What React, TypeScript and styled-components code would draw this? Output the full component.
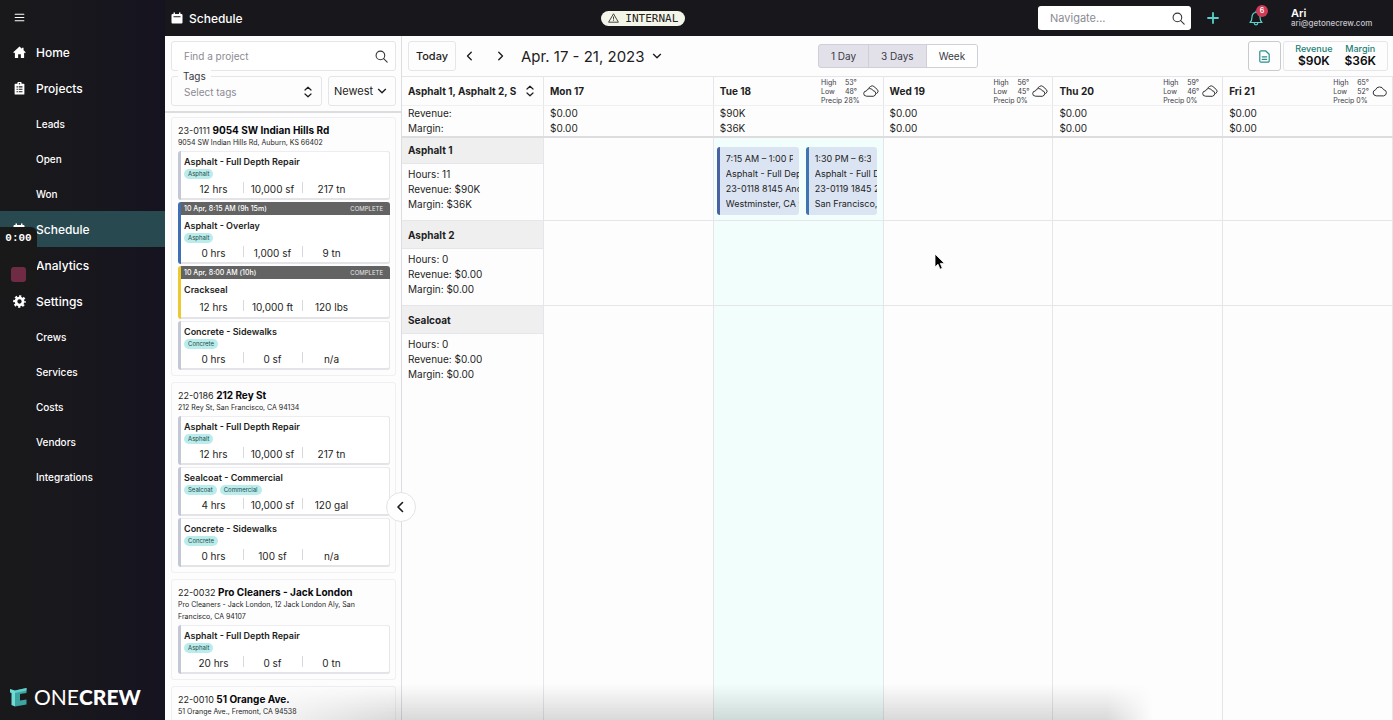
import React from "react";
import styled, { createGlobalStyle, css } from "styled-components";
import { LuMenu } from "react-icons/lu";

const GlobalStyle = createGlobalStyle`
  *, *::before, *::after { box-sizing: border-box; }
  body { margin: 0; font-family: Inter, "Liberation Sans", sans-serif; color: #1d1d22; background: #fdfdfe; }
  button, input, select { font: inherit; color: inherit; margin: 0; padding: 0; }
  h1, h2, h3, p, ul, dl, dd { margin: 0; padding: 0; font: inherit; }
  ul { list-style: none; }
  a { color: inherit; text-decoration: none; }
  svg { display: block; flex: none; }
`;

const teal = "#5bd0cb";
const line = "#e6e6ea";

/* ---------- shell ---------- */

const Shell = styled.div`
  display: flex;
  height: 100vh;
  overflow: hidden;
`;

const Sidebar = styled.aside`
  position: relative;
  display: flex;
  flex-direction: column;
  flex: none;
  width: 165px;
  color: #fff;
  background: linear-gradient(90deg, #19191b 0%, #18171d 50%, #161320 100%);
`;

const MenuButton = styled.button`
  display: flex;
  align-items: center;
  height: 34px;
  padding-left: 13px;
  border: 0;
  background: none;
`;

const Nav = styled.nav`
  display: flex;
  flex-direction: column;
  flex: 1;
`;

const NavLink = styled.a<{ $sub?: boolean; $active?: boolean }>`
  display: flex;
  align-items: center;
  height: ${(p) => (p.$sub ? 35 : 36)}px;
  padding-left: 13px;
  font-size: ${(p) => (p.$sub ? 10 : 12)}px;
  font-weight: 500;
  background: ${(p) => (p.$active ? "#28494f" : "none")};
`;

const NavIcon = styled.span`
  display: flex;
  width: 23px;
`;

const Brand = styled.div`
  display: flex;
  align-items: center;
  gap: 7px;
  height: 46px;
  padding-left: 10px;
  font: 400 21px/24px "Lato", sans-serif;
  strong { font-weight: 900; }
`;

const Recorder = styled.div`
  position: absolute;
  left: 0;
  top: 227px;
  width: 37px;
  height: 68px;
  border-radius: 0 6px 6px 0;
  background: #19191a;
`;

const RecorderTime = styled.div`
  height: 23px;
  font: 700 11px/23px "Liberation Mono", monospace;
  text-align: center;
`;

const StopButton = styled.button`
  display: block;
  width: 15px;
  height: 15px;
  margin: 17px 0 0 11px;
  border: 0;
  border-radius: 3px;
  background: #6f2b43;
`;

const Main = styled.div`
  display: flex;
  flex-direction: column;
  flex: 1;
  min-width: 0;
`;

/* ---------- top bar ---------- */

const TopBar = styled.header`
  display: flex;
  align-items: center;
  justify-content: space-between;
  flex: none;
  height: 36px;
  padding-right: 16px;
  color: #fff;
  background: #18171c;
`;

const PageTitle = styled.h1`
  display: flex;
  align-items: center;
  gap: 6px;
  padding: 0 6px 0 6px;
  font-size: 12px;
  font-weight: 500;
`;

const InternalBadge = styled.span`
  display: flex;
  align-items: center;
  gap: 6px;
  height: 15px;
  padding: 0 7px;
  border-radius: 8px;
  color: #222;
  background: #f4f5e9;
  font: 400 11px/15px "DejaVu Sans Mono", monospace;
`;

const TopActions = styled.div`
  display: flex;
  align-items: center;
`;

const SearchBox = styled.label<{ $bordered?: boolean }>`
  display: flex;
  align-items: center;
  height: ${(p) => (p.$bordered ? 30 : 24)}px;
  padding: 0 ${(p) => (p.$bordered ? 7 : 6)}px 0 12px;
  border: ${(p) => (p.$bordered ? `1px solid ${line}` : "0")};
  border-radius: 3px;
  color: #333;
  background: #fff;
  input {
    flex: 1;
    width: 122px;
    min-width: 0;
    border: 0;
    outline: 0;
    background: none;
    font-size: ${(p) => (p.$bordered ? 10 : 11)}px;
  }
  input::placeholder { color: #8b8b92; opacity: 1; }
`;

const IconButton = styled.button`
  position: relative;
  display: flex;
  align-items: center;
  justify-content: center;
  width: 24px;
  height: 24px;
  border: 0;
  color: inherit;
  background: none;
`;

const Actions = styled.div`
  display: flex;
  gap: 19px;
  margin: 0 23px 0 10px;
  color: ${teal};
`;

const Count = styled.span`
  position: absolute;
  right: 0;
  top: -1px;
  width: 12px;
  height: 12px;
  border-radius: 50%;
  color: #fff;
  background: #cf3a55;
  font-size: 7px;
  font-weight: 600;
  line-height: 12px;
  text-align: center;
`;

const User = styled.div`
  width: 86px;
  font-size: 8px;
  font-weight: 500;
  line-height: 10px;
  color: #c4c4ca;
  strong { display: block; font-size: 11px; font-weight: 600; color: #fff; }
`;

const Workspace = styled.div`
  display: flex;
  flex: 1;
  min-height: 0;
`;

/* ---------- project list ---------- */

const ProjectPane = styled.section`
  position: relative;
  display: flex;
  flex-direction: column;
  flex: none;
  width: 237px;
  border-right: 1px solid #dcdce2;
`;

const Filters = styled.div`
  display: flex;
  flex-direction: column;
  flex: none;
  gap: 5px;
  height: 77px;
  padding: 5px 5px 0 6px;
  border-bottom: 2px solid #dddde0;
`;

const FilterRow = styled.div`
  display: flex;
  gap: 6px;
  height: 30px;
`;

const TagsField = styled.label`
  position: relative;
  display: flex;
  align-items: center;
  justify-content: space-between;
  flex: 1;
  min-width: 0;
  padding: 2px 9px 0 12px;
  border: 1px solid ${line};
  border-radius: 3px;
  color: #888890;
  font-size: 10px;
`;

const Legend = styled.span`
  position: absolute;
  top: -7px;
  left: 6px;
  padding: 0 5px;
  color: #38383e;
  background: #fdfdfe;
  line-height: 13px;
`;

const TagInput = styled.input`
  flex: 1;
  min-width: 0;
  border: 0;
  outline: 0;
  background: none;
  &::placeholder { color: #8b8b92; opacity: 1; }
`;

const SortField = styled.div`
  position: relative;
  flex: none;
  width: 68px;
  select {
    width: 100%;
    height: 100%;
    padding-left: 5px;
    appearance: none;
    border: 1px solid ${line};
    border-radius: 3px;
    background: none;
    font-size: 11px;
  }
  svg { position: absolute; right: 9px; top: 10px; pointer-events: none; }
`;

const ProjectList = styled.div`
  display: flex;
  flex-direction: column;
  flex: 1;
  gap: 6px;
  min-height: 0;
  overflow: hidden;
  padding: 4px 5px 0 6px;
`;

const ProjectCard = styled.article`
  flex: none;
  padding: 5px 5px;
  border: 1px solid #f0f0f4;
  border-radius: 3px;
`;

const ProjectName = styled.h2`
  height: 14px;
  padding-left: 1px;
  font-size: 9px;
  line-height: 14px;
  white-space: nowrap;
  strong { font-size: 10px; font-weight: 700; color: #08080b; }
`;

const Address = styled.p`
  padding: 0 16px 0 1px;
  font-size: 7px;
  line-height: 12px;
`;

const Services = styled.ul`
  display: flex;
  flex-direction: column;
  gap: 2px;
  margin-top: 2px;
  padding-left: 1px;
`;

const Service = styled.li<{ $color: string }>`
  overflow: hidden;
  border-left: 3px solid ${(p) => p.$color};
  border-radius: 3px;
  background: #fff;
  box-shadow: inset -1px 0 0 ${line}, inset 0 1px 0 #ededf1, inset 0 -2px 0 #e3e3e8;
`;

const StatusBar = styled.div`
  display: flex;
  align-items: center;
  justify-content: space-between;
  height: 13px;
  padding: 0 7px 0 3px;
  color: #fff;
  background: #636363;
  font-size: 7px;
  font-weight: 500;
  small { font-size: 6px; font-weight: 400; color: #e8e8e8; }
`;

const ServiceBody = styled.div`
  min-height: 40px;
  padding: 3px;
`;

const ServiceName = styled.h3`
  font-size: 9px;
  font-weight: 600;
  line-height: 15px;
`;

const Pills = styled.div`
  display: flex;
  gap: 3px;
`;

const Pill = styled.span`
  height: 10px;
  padding: 0 4px;
  border-radius: 5px;
  color: #23494b;
  background: #b9ecea;
  font-size: 6px;
  line-height: 10px;
`;

const Figures = styled.div`
  display: grid;
  grid-template-columns: repeat(3, 59px);
  margin-top: 2px;
  font-size: 10px;
  line-height: 16px;
  text-align: center;
`;

const Figure = styled.span`
  position: relative;
  & + &::before {
    content: "";
    position: absolute;
    left: 0;
    top: 1px;
    width: 1px;
    height: 11px;
    background: #d8d8de;
  }
`;

const Collapse = styled.button`
  position: absolute;
  right: -15px;
  bottom: 198px;
  z-index: 2;
  display: flex;
  align-items: center;
  justify-content: center;
  width: 30px;
  height: 30px;
  border: 1px solid #e4e4e8;
  border-radius: 50%;
  background: #fff;
`;

/* ---------- calendar ---------- */

const Calendar = styled.section`
  display: flex;
  flex-direction: column;
  flex: 1;
  min-width: 0;
`;

const Toolbar = styled.div`
  display: flex;
  align-items: center;
  flex: none;
  height: 40px;
  padding: 0 5px 0 6px;
`;

const TodayButton = styled.button`
  width: 48px;
  height: 30px;
  margin-right: 2px;
  border: 1px solid ${line};
  border-radius: 3px;
  background: none;
  font-size: 11px;
  font-weight: 500;
`;

const RangeButton = styled.button`
  display: flex;
  align-items: center;
  gap: 7px;
  margin-left: 9px;
  border: 0;
  background: none;
  font-size: 15px;
`;

const Steps = styled.div`
  display: flex;
  gap: 6px;
`;

const Left = styled.div`
  display: flex;
  flex: 1;
  align-items: center;
`;

const Right = styled.div`
  display: flex;
  flex: 1;
  justify-content: flex-end;
  gap: 2px;
`;

const Segments = styled.div`
  display: flex;
  height: 24px;
  border: 1px solid #cfcfd8;
  border-radius: 3px;
  background: #e2e1ea;
  overflow: hidden;
`;

const Segment = styled.button<{ $on?: boolean }>`
  padding: 0 12px;
  border: 0;
  background: ${(p) => (p.$on ? "#fff" : "none")};
  color: #3a3946;
  font-size: 10px;
  & + & { border-left: 1px solid #cfcfd8; }
`;

const ReportButton = styled.button`
  display: flex;
  align-items: center;
  justify-content: center;
  width: 33px;
  height: 30px;
  border: 1px solid #c9c9d0;
  border-radius: 3px;
  color: #2a8f8d;
  background: none;
`;

const Totals = styled.dl`
  display: flex;
  gap: 12px;
  height: 30px;
  padding: 1px 11px 0;
  border: 1px solid ${line};
  border-radius: 3px;
  text-align: center;
  dt { color: #237d76; font-size: 9px; font-weight: 500; line-height: 12px; }
  dd { color: #0b0b0e; font-size: 12px; font-weight: 600; line-height: 12px; }
`;

const columns = css`
  display: grid;
  grid-template-columns: 142px repeat(5, minmax(0, 1fr));
`;

const HeadRow = styled.div`
  ${columns}
  flex: none;
  height: 30px;
  border-top: 1px solid ${line};
  border-bottom: 1px solid #f0f0f3;
`;

const HeadCell = styled.div`
  display: flex;
  align-items: center;
  justify-content: space-between;
  min-width: 0;
  padding: 0 4px 0 6px;
  border-right: 1px solid ${line};
  font-size: 10px;
  font-weight: 700;
`;

const CrewPicker = styled.button`
  display: flex;
  flex: 1;
  align-items: center;
  justify-content: space-between;
  padding-right: 5px;
  border: 0;
  background: none;
  font-weight: 700;
  white-space: nowrap;
`;

const Weather = styled.div`
  display: flex;
  align-items: center;
  gap: 3px;
  color: #3b3b40;
  font-size: 7px;
  font-weight: 400;
  line-height: 9px;
`;

const Readings = styled.div`
  display: grid;
  grid-template-columns: 24px auto;
  white-space: nowrap;
`;

const Precip = styled.span`
  grid-column: 1 / -1;
`;

const SumRow = styled.div`
  ${columns}
  position: relative;
  flex: none;
  height: 30px;
  box-shadow: 0 2px 0 #dddde0;
`;

const SumCell = styled.div`
  padding-left: 6px;
  border-right: 1px solid ${line};
  font-size: 10px;
  line-height: 15px;
`;

const CrewRow = styled.div<{ $last?: boolean }>`
  ${columns}
  flex: ${(p) => (p.$last ? "1" : "none")};
  min-height: 85px;
  border-bottom: ${(p) => (p.$last ? "0" : `1px solid ${line}`)};
`;

const CrewInfo = styled.div`
  border-right: 1px solid ${line};
  font-size: 10px;
  line-height: 15px;
  p { padding-left: 6px; }
  p:first-of-type { padding-top: 3px; }
`;

const CrewName = styled.h2`
  height: 28px;
  padding-left: 6px;
  border-bottom: 1px solid ${line};
  background: #efeff0;
  font-weight: 700;
  line-height: 28px;
`;

const DayCell = styled.div<{ $today?: boolean }>`
  border-right: 1px solid ${line};
  background: ${(p) => (p.$today ? "#f1fefc" : "none")};
`;

const Events = styled.div`
  display: grid;
  grid-template-columns: 82fr 71fr;
  gap: 7px;
  padding: 11px 6px 0 3px;
`;

const Event = styled.div<{ $color: string }>`
  min-width: 0;
  overflow: hidden;
  padding: 4px 0 4px 6px;
  border-left: 3px solid ${(p) => p.$color};
  border-radius: 3px;
  background: #dbe4f3;
  font-size: 9px;
  line-height: 15px;
  p { overflow: hidden; white-space: nowrap; }
  p:first-child { margin-right: 6px; }
`;

const BottomShade = styled.div`
  position: fixed;
  left: 230px;
  right: 240px;
  bottom: 0;
  height: 36px;
  pointer-events: none;
  background: linear-gradient(180deg, rgba(0, 0, 0, 0), rgba(0, 0, 0, 0.14));
  mask-image: linear-gradient(90deg, transparent, #000 18%, #000 95%, transparent);
`;

const Pointer = styled.svg`
  position: fixed;
  left: 934px;
  top: 253px;
`;

/* ---------- icons ---------- */

const HomeIcon = () => (
  <svg width="13" height="13" viewBox="0 0 24 24" fill="#fff"><path d="M12 1 0.500 11.500 2 13.200l1.500-1.200V22h6v-7h5v7h6V12l1.500 1.200 1.500-1.700L19.500 7.700V3h-3v2z" /></svg>
);
const ClipboardIcon = () => (
  <svg width="13" height="13" viewBox="0 0 24 24">
    <path fill="#fff" fillRule="evenodd" d="M4 3h4a4 4 0 0 1 8 0h4a1 1 0 0 1 1 1v18a1 1 0 0 1-1 1H4a1 1 0 0 1-1-1V4a1 1 0 0 1 1-1zm8-1a1.300 1.300 0 1 0 0 2.600A1.300 1.300 0 0 0 12 2zM6.500 8v2H9V8zm4 0v2h7V8zm-4 4.500v2H9v-2zm4 0v2h7v-2zm-4 4.500v2H9v-2zm4 0v2h7v-2z" />
  </svg>
);
const CalendarIcon = () => (
  <svg width="12" height="12" viewBox="0 0 24 24" fill="none">
    <path fill="#fff" fillRule="evenodd" d="M5 1h3v3h8V1h3v3h2a2 2 0 0 1 2 2v15a2 2 0 0 1-2 2H3a2 2 0 0 1-2-2V6a2 2 0 0 1 2-2h2zM5 8.500v2h14v-2z" />
  </svg>
);
const GearIcon = () => (
  <svg width="13" height="13" viewBox="0 0 24 24" fill="none" stroke="#fff">
    <circle cx="12" cy="12" r="6.500" strokeWidth="5" />
    <circle cx="12" cy="12" r="10" strokeWidth="3.500" strokeDasharray="4.200 3.654" strokeDashoffset="2" />
  </svg>
);
const SearchIcon = ({ size = 13 }: { size?: number }) => (
  <svg width={size} height={size} viewBox="0 0 24 24" fill="none" stroke="currentColor" strokeWidth="2" strokeLinecap="round">
    <circle cx="10" cy="10" r="8" /><path d="m16 16 6.500 6.500" />
  </svg>
);
const Chevron = ({ dir, size = 10 }: { dir: "left" | "right" | "down"; size?: number }) => (
  <svg width={size} height={size} viewBox="0 0 12 12" fill="none" stroke="#1c1c20" strokeWidth="1.600" strokeLinecap="round" strokeLinejoin="round">
    <path d={{ left: "M7.500 1.500 3 6l4.500 4.500", right: "M4.500 1.500 9 6l-4.500 4.500", down: "M1.800 4 6 8.200 10.200 4" }[dir]} />
  </svg>
);
const SortIcon = () => (
  <svg width="8" height="12" viewBox="0 0 8 12" fill="none" stroke="#1c1c20" strokeWidth="1.200" strokeLinecap="round" strokeLinejoin="round">
    <path d="M1 4 4 1.200 7 4M1 8l3 2.800L7 8" />
  </svg>
);
const WarningIcon = () => (
  <svg width="11" height="10" viewBox="0 0 11 10" fill="none" stroke="#333" strokeWidth="0.900" strokeLinejoin="round">
    <path d="M5.500 0.800 10.400 9.200H0.600zM5.500 3.500v3M5.500 7.200v.8" />
  </svg>
);
const PlusIcon = () => (
  <svg width="12" height="12" viewBox="0 0 12 12" stroke="currentColor" strokeWidth="1.800" strokeLinecap="round"><path d="M6 1v10M1 6h10" /></svg>
);
const BellIcon = () => (
  <svg width="14" height="16" viewBox="0 0 14 16" fill="none" stroke="currentColor" strokeWidth="1.200" strokeLinecap="round" strokeLinejoin="round">
    <path d="M1 12.500c1.600-1.300 2-2.500 2-5.500 0-2.600 1.500-4.500 4-4.500S11 4.400 11 7c0 3 .4 4.200 2 5.500zM7 2.500V1M5.200 13a1.800 1.800 0 0 0 3.600 0" />
  </svg>
);
const DocIcon = () => (
  <svg width="11" height="13" viewBox="0 0 11 13" fill="none" stroke="currentColor" strokeWidth="1.200" strokeLinecap="round" strokeLinejoin="round">
    <path d="M2 .8h4.500l3.700 3.500V11a1.200 1.200 0 0 1-1.200 1.200H2A1.200 1.200 0 0 1 .8 11V2A1.200 1.200 0 0 1 2 .8zM3.200 6.800h4.500M3.200 9.300h4.500" />
  </svg>
);
const CloudIcon = ({ double }: { double?: boolean }) => (
  <svg width="16" height="14" viewBox="0 0 16 14" fill="none" stroke="#333" strokeWidth="1" strokeLinecap="round" strokeLinejoin="round">
    {double ? (
      <>
        <path d="M3.200 12.200a2.600 2.600 0 0 1 .2-5.200 3.600 3.600 0 0 1 6.700-.3 2.800 2.800 0 0 1 .6 5.500z" />
        <path d="M5.800 3.900 7.500 2.500a2.600 2.600 0 0 1 3.400 0l3.300 2.900a2.400 2.400 0 0 1 0 3.600l-.6.600" />
      </>
    ) : (
      <path d="M3.800 11.800a3 3 0 0 1-.3-5.900 4.300 4.300 0 0 1 8.100-.2 3.100 3.100 0 0 1 .4 6.100z" />
    )}
  </svg>
);
const BrandMark = () => (
  <svg width="17" height="20" viewBox="0 0 17 20">
    <path fill="#6fdcd6" d="M0 2 5 3.500V19.500L1.500 18V6L0 5.500z" />
    <path fill="#3fa3a2" d="M5 3.500 16.500 1v5L10 7v6.500l6.500-1v5L5 19.500z" />
    <path fill="#5fd0cb" d="M5 3.500 16.500 1v2.500L5 6z" />
  </svg>
);

/* ---------- data ---------- */

type Item = { name: string; color?: string; when?: string; tags: string[]; figures: string[] };
type Project = { id: string; name: string; address: string; items: Item[] };

const repair: Item = { name: "Asphalt - Full Depth Repair", tags: ["Asphalt"], figures: ["12 hrs", "10,000 sf", "217 tn"] };

const projects: Project[] = [
  {
    id: "23-0111", name: "9054 SW Indian Hills Rd", address: "9054 SW Indian Hills Rd, Auburn, KS 66402",
    items: [
      repair,
      { name: "Asphalt - Overlay", color: "#3f6fb5", when: "10 Apr, 8:15 AM (9h 15m)", tags: ["Asphalt"], figures: ["0 hrs", "1,000 sf", "9 tn"] },
      { name: "Crackseal", color: "#ecc92f", when: "10 Apr, 8:00 AM (10h)", tags: [], figures: ["12 hrs", "10,000 ft", "120 lbs"] },
      { name: "Concrete - Sidewalks", tags: ["Concrete"], figures: ["0 hrs", "0 sf", "n/a"] },
    ],
  },
  {
    id: "22-0186", name: "212 Rey St", address: "212 Rey St, San Francisco, CA 94134",
    items: [
      repair,
      { name: "Sealcoat - Commercial", tags: ["Sealcoat", "Commercial"], figures: ["4 hrs", "10,000 sf", "120 gal"] },
      { name: "Concrete - Sidewalks", tags: ["Concrete"], figures: ["0 hrs", "100 sf", "n/a"] },
    ],
  },
  {
    id: "22-0032", name: "Pro Cleaners - Jack London", address: "Pro Cleaners - Jack London, 12 Jack London Aly, San Francisco, CA 94107",
    items: [{ ...repair, figures: ["20 hrs", "0 sf", "0 tn"] }],
  },
  { id: "22-0010", name: "51 Orange Ave.", address: "51 Orange Ave., Fremont, CA 94538", items: [] },
];

const days = [
  { label: "Mon 17", revenue: "$0.00", margin: "$0.00" },
  { label: "Tue 18", revenue: "$90K", margin: "$36K", high: "53°", low: "48°", precip: "28%", today: true },
  { label: "Wed 19", revenue: "$0.00", margin: "$0.00", high: "56°", low: "45°", precip: "0%" },
  { label: "Thu 20", revenue: "$0.00", margin: "$0.00", high: "59°", low: "46°", precip: "0%" },
  { label: "Fri 21", revenue: "$0.00", margin: "$0.00", high: "65°", low: "52°", precip: "0%", clear: true },
];

const crews = [
  { name: "Asphalt 1", hours: "11", revenue: "$90K", margin: "$36K" },
  { name: "Asphalt 2", hours: "0", revenue: "$0.00", margin: "$0.00" },
  { name: "Sealcoat", hours: "0", revenue: "$0.00", margin: "$0.00" },
];

const events = [
  { color: "#4a62a3", lines: ["7:15 AM – 1:00 P", "Asphalt - Full Dep", "23-0118 8145 And", "Westminster, CA 9"] },
  { color: "#3f74b3", lines: ["1:30 PM – 6:3", "Asphalt - Full D", "23-0119 1845 2", "San Francisco,"] },
];

const nav: { label: string; icon?: React.ReactNode; sub?: boolean; active?: boolean }[] = [
  { label: "Home", icon: <HomeIcon /> },
  { label: "Projects", icon: <ClipboardIcon /> },
  { label: "Leads", sub: true },
  { label: "Open", sub: true },
  { label: "Won", sub: true },
  { label: "Schedule", icon: <CalendarIcon />, active: true },
  { label: "Analytics" },
  { label: "Settings", icon: <GearIcon /> },
  { label: "Crews", sub: true },
  { label: "Services", sub: true },
  { label: "Costs", sub: true },
  { label: "Vendors", sub: true },
  { label: "Integrations", sub: true },
];

export default function App() {
  return (
    <Shell>
      <GlobalStyle />
      <Sidebar>
        <MenuButton aria-label="Menu"><LuMenu size={13} color="#fff" /></MenuButton>
        <Nav>
          {nav.map((n) => (
            <NavLink key={n.label} href="#" $sub={n.sub} $active={n.active}>
              <NavIcon>{n.icon}</NavIcon>
              {n.label}
            </NavLink>
          ))}
        </Nav>
        <Brand><BrandMark /><span>ONE<strong>CREW</strong></span></Brand>
        <Recorder>
          <RecorderTime>0:00</RecorderTime>
          <StopButton aria-label="Stop recording" />
        </Recorder>
      </Sidebar>

      <Main>
        <TopBar>
          <PageTitle><CalendarIcon />Schedule</PageTitle>
          <InternalBadge><WarningIcon />INTERNAL</InternalBadge>
          <TopActions>
            <SearchBox>
              <input placeholder="Navigate..." aria-label="Navigate" />
              <SearchIcon />
            </SearchBox>
            <Actions>
              <IconButton aria-label="Add"><PlusIcon /></IconButton>
              <IconButton aria-label="Notifications"><BellIcon /><Count>6</Count></IconButton>
            </Actions>
            <User><strong>Ari</strong>ari@getonecrew.com</User>
          </TopActions>
        </TopBar>

        <Workspace>
          <ProjectPane>
            <Filters>
              <SearchBox $bordered>
                <input placeholder="Find a project" aria-label="Find a project" />
                <SearchIcon />
              </SearchBox>
              <FilterRow>
                <TagsField>
                  <Legend>Tags</Legend>
                  <TagInput placeholder="Select tags" />
                  <SortIcon />
                </TagsField>
                <SortField>
                  <select aria-label="Sort projects"><option>Newest</option></select>
                  <Chevron dir="down" />
                </SortField>
              </FilterRow>
            </Filters>
            <ProjectList>
              {projects.map((p) => (
                <ProjectCard key={p.id}>
                  <ProjectName>{p.id} <strong>{p.name}</strong></ProjectName>
                  <Address>{p.address}</Address>
                  <Services>
                    {p.items.map((s) => (
                      <Service key={s.name} $color={s.color ?? "#c3c7d6"}>
                        {s.when && <StatusBar>{s.when}<small>COMPLETE</small></StatusBar>}
                        <ServiceBody>
                          <ServiceName>{s.name}</ServiceName>
                          {s.tags.length > 0 && <Pills>{s.tags.map((t) => <Pill key={t}>{t}</Pill>)}</Pills>}
                          <Figures>{s.figures.map((f) => <Figure key={f}>{f}</Figure>)}</Figures>
                        </ServiceBody>
                      </Service>
                    ))}
                  </Services>
                </ProjectCard>
              ))}
            </ProjectList>
            <Collapse aria-label="Collapse project list"><Chevron dir="left" size={12} /></Collapse>
          </ProjectPane>

          <Calendar>
            <Toolbar>
              <Left>
                <TodayButton>Today</TodayButton>
                <Steps>
                  <IconButton aria-label="Previous week"><Chevron dir="left" /></IconButton>
                  <IconButton aria-label="Next week"><Chevron dir="right" /></IconButton>
                </Steps>
                <RangeButton>Apr. 17 - 21, 2023<Chevron dir="down" /></RangeButton>
              </Left>
              <Segments>
                <Segment>1 Day</Segment>
                <Segment>3 Days</Segment>
                <Segment $on>Week</Segment>
              </Segments>
              <Right>
                <ReportButton aria-label="Report"><DocIcon /></ReportButton>
                <Totals>
                  <div><dt>Revenue</dt><dd>$90K</dd></div>
                  <div><dt>Margin</dt><dd>$36K</dd></div>
                </Totals>
              </Right>
            </Toolbar>

            <HeadRow>
              <HeadCell>
                <CrewPicker>Asphalt 1, Asphalt 2, S<SortIcon /></CrewPicker>
              </HeadCell>
              {days.map((d) => (
                <HeadCell key={d.label}>
                  {d.label}
                  {d.high && (
                    <Weather>
                      <Readings>
                        <span>High</span><span>{d.high}</span>
                        <span>Low</span><span>{d.low}</span>
                        <Precip>Precip {d.precip}</Precip>
                      </Readings>
                      <CloudIcon double={!d.clear} />
                    </Weather>
                  )}
                </HeadCell>
              ))}
            </HeadRow>
            <SumRow>
              <SumCell>Revenue:<br />Margin:</SumCell>
              {days.map((d) => <SumCell key={d.label}>{d.revenue}<br />{d.margin}</SumCell>)}
            </SumRow>
            {crews.map((c, i) => (
              <CrewRow key={c.name} $last={i === crews.length - 1}>
                <CrewInfo>
                  <CrewName>{c.name}</CrewName>
                  <p>Hours: {c.hours}</p>
                  <p>Revenue: {c.revenue}</p>
                  <p>Margin: {c.margin}</p>
                </CrewInfo>
                {days.map((d) => (
                  <DayCell key={d.label} $today={d.today}>
                    {i === 0 && d.today && (
                      <Events>
                        {events.map((e) => (
                          <Event key={e.color} $color={e.color}>
                            {e.lines.map((l) => <p key={l}>{l}</p>)}
                          </Event>
                        ))}
                      </Events>
                    )}
                  </DayCell>
                ))}
              </CrewRow>
            ))}
          </Calendar>
        </Workspace>
      </Main>
      <BottomShade />
      <Pointer width="11" height="18" viewBox="0 0 11 18">
        <path d="M1 1v13l3-2.800 2 5 2.300-1-2-4.800H10.500z" fill="#000" stroke="#fff" strokeWidth="0.800" />
      </Pointer>
    </Shell>
  );
}
